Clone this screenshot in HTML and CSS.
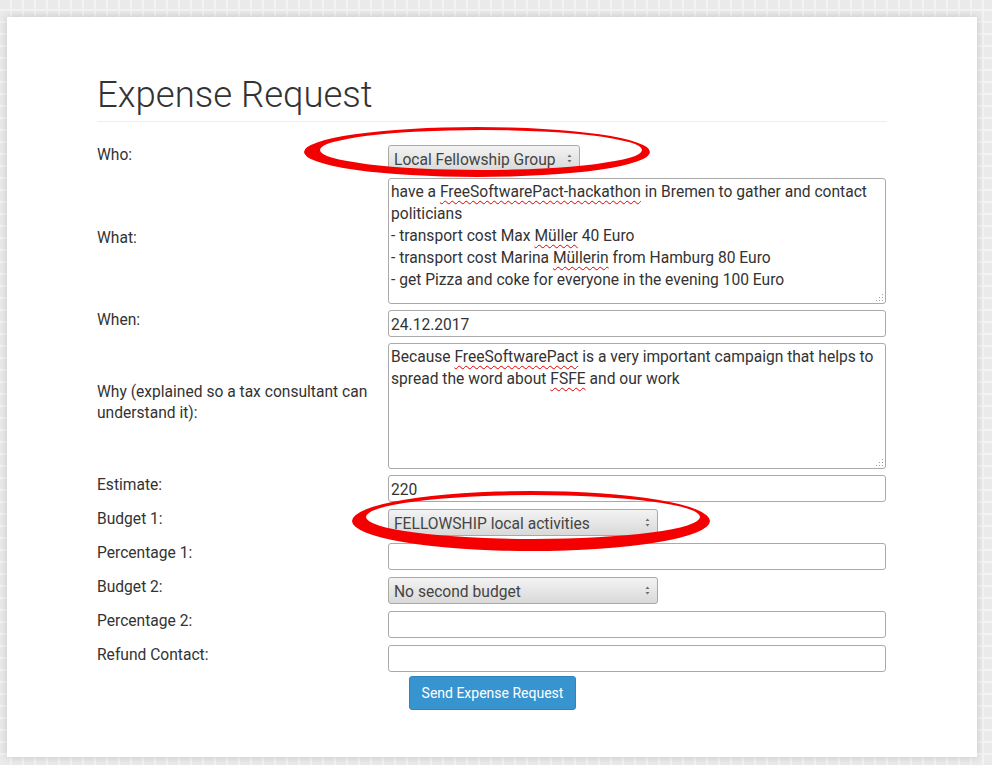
FILE: index.html
```html
<!DOCTYPE html>
<html lang="en">
<head>
<meta charset="utf-8">
<title>Expense Request</title>
<link rel="stylesheet" href="styles.css">
</head>
<body>
<main class="card">
  <h1 class="title">Expense Request</h1>
  <form class="form">
    <div class="row">
      <label class="label">Who:</label>
      <div class="control">
        <div class="select select-who"><span>Local Fellowship Group</span>
          <svg class="arrows" width="7" height="11" viewBox="0 0 7 11"><path d="M3.5 1.5 L5.5 4 L1.5 4 Z M1.5 7 L5.5 7 L3.5 9.5 Z" fill="#6e6e6e"/></svg>
        </div>
      </div>
    </div>
    <div class="row tall">
      <label class="label">What:</label>
      <div class="control">
        <div class="textarea">have a <span class="sp">FreeSoftwarePact-hackathon</span> in Bremen to gather and contact politicians<br>- transport cost Max <span class="sp">Müller</span> 40 Euro<br>- transport cost Marina <span class="sp">Müllerin</span> from Hamburg 80 Euro<br>- get Pizza and coke for everyone in the evening 100 Euro
          <svg class="grip" width="9" height="9" viewBox="0 0 9 9"><g fill="#a0a0a0"><rect x="7" y="1" width="1" height="1"/><rect x="4" y="4" width="1" height="1"/><rect x="7" y="4" width="1" height="1"/><rect x="1" y="7" width="1" height="1"/><rect x="4" y="7" width="1" height="1"/><rect x="7" y="7" width="1" height="1"/></g></svg>
        </div>
      </div>
    </div>
    <div class="row">
      <label class="label">When:</label>
      <div class="control"><div class="input">24.12.2017</div></div>
    </div>
    <div class="row tall">
      <label class="label">Why (explained so a tax consultant can understand it):</label>
      <div class="control">
        <div class="textarea">Because <span class="sp">FreeSoftwarePact</span> is a very important campaign that helps to spread the word about <span class="sp">FSFE</span> and our work
          <svg class="grip" width="9" height="9" viewBox="0 0 9 9"><g fill="#a0a0a0"><rect x="7" y="1" width="1" height="1"/><rect x="4" y="4" width="1" height="1"/><rect x="7" y="4" width="1" height="1"/><rect x="1" y="7" width="1" height="1"/><rect x="4" y="7" width="1" height="1"/><rect x="7" y="7" width="1" height="1"/></g></svg>
        </div>
      </div>
    </div>
    <div class="row">
      <label class="label">Estimate:</label>
      <div class="control"><div class="input">220</div></div>
    </div>
    <div class="row">
      <label class="label">Budget 1:</label>
      <div class="control">
        <div class="select select-budget"><span>FELLOWSHIP local activities</span>
          <svg class="arrows" width="7" height="11" viewBox="0 0 7 11"><path d="M3.5 1.5 L5.5 4 L1.5 4 Z M1.5 7 L5.5 7 L3.5 9.5 Z" fill="#6e6e6e"/></svg>
        </div>
      </div>
    </div>
    <div class="row">
      <label class="label">Percentage 1:</label>
      <div class="control"><div class="input"></div></div>
    </div>
    <div class="row">
      <label class="label">Budget 2:</label>
      <div class="control">
        <div class="select select-budget"><span>No second budget</span>
          <svg class="arrows" width="7" height="11" viewBox="0 0 7 11"><path d="M3.5 1.5 L5.5 4 L1.5 4 Z M1.5 7 L5.5 7 L3.5 9.5 Z" fill="#6e6e6e"/></svg>
        </div>
      </div>
    </div>
    <div class="row">
      <label class="label">Percentage 2:</label>
      <div class="control"><div class="input"></div></div>
    </div>
    <div class="row">
      <label class="label">Refund Contact:</label>
      <div class="control"><div class="input"></div></div>
    </div>
    <div class="actions">
      <button type="button" class="btn">Send Expense Request</button>
    </div>
  </form>
</main>
<svg class="marks" width="992" height="765" viewBox="0 0 992 765">
  <path fill="#f40000" fill-rule="evenodd" d="M304,152 a173,25 0 1,0 346,0 a173,25 0 1,0 -346,0 Z M320,150 a161,20 0 1,0 322,0 a161,20 0 1,0 -322,0 Z"/>
  <path fill="#f40000" fill-rule="evenodd" d="M352,521 a179,30 0 1,0 358,0 a179,30 0 1,0 -358,0 Z M366,517 a167,22 0 1,0 334,0 a167,22 0 1,0 -334,0 Z"/>
</svg>
</body>
</html>
```

FILE: styles.css
```css
html, body {
  margin: 0;
  padding: 0;
}
body {
  position: relative;
  width: 992px;
  height: 765px;
  overflow: hidden;
  font-family: Roboto, "Liberation Sans", sans-serif;
  color: #333;
  background-color: #eaeaea;
  background-image:
    repeating-linear-gradient(90deg, transparent 0 10px, #f3f3f3 10px 12px),
    repeating-linear-gradient(0deg, transparent 0 10px, #f3f3f3 10px 12px);
}
.card {
  box-sizing: border-box;
  margin: 17px 0 0 7px;
  width: 970px;
  height: 740px;
  background: #fff;
  box-shadow: 0 0 8px rgba(0, 0, 0, 0.16);
  padding: 57px 90px 0 90px;
}
.title {
  margin: 0;
  font-size: 36.5px;
  font-weight: 300;
  line-height: 41px;
  color: #333;
  padding-bottom: 6px;
  border-bottom: 1px solid #eee;
}
.form {
  margin-top: 23px;
  display: flex;
  flex-direction: column;
  gap: 7px;
}
.row {
  display: grid;
  grid-template-columns: 291px 498px;
  align-items: center;
}
.row.tall {
  margin: -1px 0;
}
.label {
  font-size: 15.6px;
  line-height: 21px;
  color: #333;
  margin: 0 0 6px 0;
  padding-right: 10px;
}
.control {
  display: flex;
}
.select {
  box-sizing: border-box;
  height: 27px;
  display: flex;
  align-items: center;
  justify-content: space-between;
  padding: 2px 6px 0 5px;
  border: 1px solid #a8a8a8;
  border-radius: 3px;
  background: linear-gradient(#f3f3f3, #d9d9d9);
  font-size: 15.6px;
  color: #444;
}
.select-who { width: 192px; }
.select-budget { width: 270px; }
.arrows { flex: none; margin-top: -2px; }
.input {
  box-sizing: border-box;
  width: 498px;
  height: 27px;
  border: 1px solid #aaa;
  border-radius: 3px;
  padding: 2px 2px 0;
  font-size: 15.6px;
  line-height: 24px;
  color: #333;
}
.textarea {
  position: relative;
  box-sizing: border-box;
  width: 498px;
  height: 126px;
  border: 1px solid #aaa;
  border-radius: 3px;
  padding: 2px 2px;
  font-size: 15.6px;
  line-height: 22px;
  color: #333;
}
.sp {
  text-decoration: underline wavy #e00000;
  text-decoration-thickness: 1px;
  text-underline-offset: 3px;
  text-decoration-skip-ink: none;
}
.grip {
  position: absolute;
  right: 1px;
  bottom: 1px;
}
.actions {
  margin: -3px 0 0 312px;
}
.btn {
  box-sizing: border-box;
  width: 167px;
  height: 34px;
  border: 1px solid #2f84bd;
  border-radius: 3px;
  background: #3894cf;
  color: #fff;
  font-family: Roboto, "Liberation Sans", sans-serif;
  font-size: 14px;
  padding: 0;
}
.marks {
  position: absolute;
  left: 0;
  top: 0;
  pointer-events: none;
}
```
